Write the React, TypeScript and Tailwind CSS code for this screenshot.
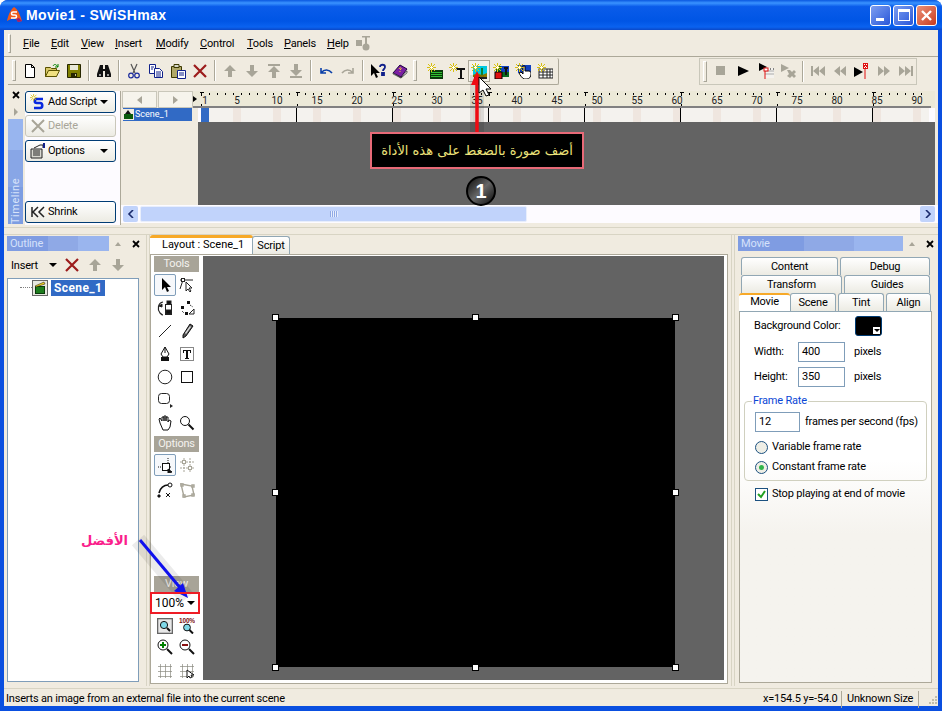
import type { ReactNode } from 'react';

const UI_FONT = 'font-[Roboto,"Liberation_Sans",sans-serif]';

const Ico = ({ children, w = 16, h = 16 }: { children: ReactNode; w?: number; h?: number }) => (
  <svg width={w} height={h} viewBox={`0 0 ${w} ${h}`} className="block shrink-0">
    {children}
  </svg>
);

const Sparkle = () => (
  <g stroke="#d8c010" strokeWidth="1">
    <path d="M4.5 0v9M0 4.5h9M1 1l7 7M8 1L1 8" />
    <path d="M4.5 3v3M3 4.5h3" stroke="#fff" />
  </g>
);

const CloseX = () => (
  <svg width="8" height="8" viewBox="0 0 8 8" className="block shrink-0">
    <path d="M1 1l6 6M7 1L1 7" stroke="#000" strokeWidth="1.8" />
  </svg>
);

const icons: Record<string, ReactNode> = {
  new: <path d="M3.5 1.5h6l3 3v10h-9zM9.5 1.5v3h3" fill="#fff" stroke="#000" />,
  open: (
    <g>
      <path d="M1.5 4.5h5l1 1h5v8h-11z" fill="#d8c868" stroke="#5a5200" />
      <path d="M1.5 13.5l3-6h11l-3 6z" fill="#f0e080" stroke="#5a5200" />
      <path d="M9 3c1-2 3-2 4 0l1 1M14 1v3h-3" fill="none" stroke="#008000" />
    </g>
  ),
  save: (
    <g>
      <path d="M1.5 1.5h13v13h-13z" fill="#808000" stroke="#262600" />
      <path d="M4 2h8v5H4z" fill="#e8e8d8" />
      <path d="M5 10h6v4H5z" fill="#262600" />
      <path d="M9 11h1v2H9z" fill="#c8c890" />
    </g>
  ),
  binoc: (
    <g fill="#111">
      <path d="M4 2h3v4h2V2h3l3 9v3H9V8H7v6H1v-3z" />
      <path d="M3 11h2v2H3zM11 11h2v2h-2z" fill="#9a9a9a" />
    </g>
  ),
  cut: (
    <g fill="none" stroke="#1a2a9c" strokeWidth="1.2">
      <path d="M5 1l4 9M11 1l-4 9" stroke="#555" />
      <circle cx="5" cy="12.5" r="2.3" />
      <circle cx="11" cy="12.5" r="2.3" />
    </g>
  ),
  copy: (
    <g stroke="#10208a">
      <path d="M1.5 1.5h6v9h-6z" fill="#fff" />
      <path d="M6.5 5.5h5l3 3v6h-8z" fill="#fff" />
      <path d="M8 9h5M8 11h5M8 13h5M3 4h3M3 6h2" />
    </g>
  ),
  paste: (
    <g>
      <path d="M1.5 3.5h10v11h-10z" fill="#b0a868" stroke="#3c3800" />
      <path d="M4 1.5h5v3H4z" fill="#d8d8c8" stroke="#3c3800" />
      <path d="M7.5 7.5h8v8h-8z" fill="#fff" stroke="#10208a" />
      <path d="M9 10h5M9 12h5" stroke="#10208a" />
    </g>
  ),
  del: <path d="M2 2l12 12M14 2L2 14" stroke="#9c1c1c" strokeWidth="2.2" fill="none" />,
  up: <path d="M8 2l6 6h-4v6H6V8H2z" fill="#a8a598" />,
  down: <path d="M8 14l6-6h-4V2H6v6H2z" fill="#a8a598" />,
  top: <path d="M2 1h12v2H2zM8 3l6 6h-4v6H6V9H2z" fill="#a8a598" />,
  bottom: <path d="M2 13h12v2H2zM8 13l6-6h-4V1H6v6H2z" fill="#a8a598" />,
  undo: <path d="M3 5v5h5M3.5 9.5C6 6 11 6 14 10" fill="none" stroke="#0a3fa8" strokeWidth="1.6" />,
  redo: <path d="M13 5v5H8M12.5 9.5C10 6 5 6 2 10" fill="none" stroke="#a8a598" strokeWidth="1.6" />,
  help: (
    <g>
      <path d="M1 1v12l3-3 2 5 2-1-2-4h4z" fill="#000" />
      <path d="M10 4c0-3 5-3 5 0 0 2-2 2-2 4M12 10h2v2h-2z" fill="none" stroke="#10208a" strokeWidth="1.8" />
    </g>
  ),
  book: (
    <g>
      <path d="M1 10l7-8 7 4-6 8z" fill="#7b1fa2" stroke="#200040" />
      <path d="M1 10l8 5 6-7v2l-6 5-8-4z" fill="#fff" stroke="#222" strokeWidth=".6" />
      <path d="M7 6c1-2 3-1 2 0l-1 1M8 8v1" stroke="#f0d030" fill="none" />
    </g>
  ),
  addMovie: (
    <g>
      <rect x="3" y="7" width="13" height="9" fill="#0a3a0a" />
      <path d="M4 9.5h11M4 11.5h11M4 13.5h11" stroke="#30c030" />
      <Sparkle />
    </g>
  ),
  addText: (
    <g>
      <path d="M7 5h9v2h-3v8h2v1H9v-1h2V7H8z" fill="#111" />
      <Sparkle />
    </g>
  ),
  addImage: (
    <g>
      <rect x="2" y="3" width="14" height="11" fill="#00c8e0" />
      <path d="M2 12l4-2 5 2 5-2v4H2z" fill="#8a7a00" />
      <path d="M10 12V5h2v7z" fill="#108030" />
      <rect x="3" y="14" width="13" height="2" fill="#222" />
      <Sparkle />
    </g>
  ),
  addShape: (
    <g>
      <rect x="3" y="3" width="13" height="11" fill="#0a6a20" />
      <path d="M8 3h8v6H8z" fill="#1040c0" />
      <rect x="2" y="9" width="7" height="7" fill="#e01010" stroke="#000" />
      <path d="M11 4h4v2h-1v6h-2V6h-1z" fill="#111" />
      <Sparkle />
    </g>
  ),
  addButton: (
    <g>
      <rect x="3" y="2" width="13" height="8" fill="#1040c0" />
      <path d="M8 8V3h2v5h4c2 0 2 2 2 3 0 3-2 5-4 5H9c-2-1-4-4-5-6l2-1 2 2z" fill="#fff" stroke="#000" />
      <Sparkle />
    </g>
  ),
  addSprite: (
    <g>
      <rect x="2" y="6" width="14" height="9" fill="#fff" stroke="#222" />
      <path d="M2 9h14M2 12h14M6 6v9M10 6v9M13 6v9" stroke="#222" />
      <Sparkle />
    </g>
  ),
  stop: <rect x="2" y="3" width="9" height="9" fill="#a8a598" />,
  play: <path d="M2 3l11 5-11 5z" fill="#000" />,
  playScene: (
    <g>
      <path d="M1 0l8 4-8 4z" fill="#000" />
      <path d="M7 5h9v10H7z" fill="#f4f2ee" />
      <path d="M7 8h9M7 11h9" stroke="#aaa" />
      <path d="M7 5v11" stroke="#e01010" />
      <rect x="6" y="5" width="4" height="3" fill="#fff" stroke="#e01010" />
      <path d="M12 6h1M15 6h1" stroke="#111" />
    </g>
  ),
  playGray: (
    <g fill="#a8a598">
      <path d="M1 1l8 4-8 4z" />
      <path d="M7 7h3l2 2 2-2 2 2-2 2 2 2-2 2-2-2-2 2-3-2 2-2z" />
    </g>
  ),
  first: <path d="M1 3h2v10H1zM9 3v10L3 8zM15 3v10L9 8z" fill="#a8a598" />,
  prev: <path d="M8 3v10L2 8zM14 3v10L8 8z" fill="#a8a598" />,
  playFlag: (
    <g>
      <path d="M0 4l9 5-9 5z" fill="#000" />
      <path d="M11 1v15" stroke="#e01010" />
      <rect x="9" y="0" width="5" height="6" fill="#e01010" />
      <path d="M10 1h1v1h-1zM12 1h1v1h-1zM11 3h1v1h-1zM10 4h1v1h-1zM12 4h1v1h-1z" fill="#fff" />
    </g>
  ),
  next: <path d="M2 3v10l6-5zM8 3v10l6-5z" fill="#a8a598" />,
  last: <path d="M1 3v10l6-5zM7 3v10l6-5zM13 3h2v10h-2z" fill="#a8a598" />,
  arrow: <path d="M5 1v12l3-3 2 5 2-1-2-4h4z" fill="#000" />,
  subselect: (
    <g fill="none" stroke="#222">
      <path d="M1 3h13M4 3l-3 9" />
      <rect x="2.5" y="1.5" width="3" height="3" fill="#fff" />
      <path d="M7 5v9l2-2 2 3 1-1-2-3h3z" fill="#fff" />
    </g>
  ),
  rotate: (
    <g fill="none" stroke="#222">
      <path d="M6 2C1 3 0 9 3 13c1 1 2 2 3 2" strokeWidth="1.2" />
      <path d="M2 6l3-2v3z" fill="#111" />
      <rect x="8.5" y="4.5" width="6" height="10" fill="#fff" />
      <rect x="9" y="10" width="5" height="4" fill="#111" />
      <rect x="10" y="1" width="4" height="3" fill="#111" />
    </g>
  ),
  scale: (
    <g>
      <path d="M8 1h3v3H8zM2 6h3v3H2zM6 12h3v3H6z" fill="#111" />
      <path d="M11 5l3 2M3 11l2 2" stroke="#111" strokeDasharray="1 1" />
      <path d="M15 9v5h-5z" fill="#fff" stroke="#222" />
    </g>
  ),
  line: <path d="M2 14L14 2" stroke="#222" />,
  pencil: (
    <g>
      <path d="M11 1l3 2-7 10-3 2 0-3z" fill="#555" stroke="#111" />
      <path d="M11 3l1 1-5 7-1-1z" fill="#ddd" />
    </g>
  ),
  pen: (
    <g stroke="#111">
      <path d="M8 1l4 7-2 3H6L4 8z" fill="#fff" />
      <path d="M8 1v6" />
      <rect x="4.5" y="11.5" width="7" height="3" fill="#111" />
    </g>
  ),
  text: (
    <g>
      <rect x="1.5" y="1.5" width="13" height="13" fill="#fff" stroke="#111" strokeDasharray="1 1" />
      <path d="M4 4h8v3h-1V5H9v7h1v1H6v-1h1V5H5v2H4z" fill="#111" />
    </g>
  ),
  circle: <circle cx="8" cy="8" r="6.8" fill="#fff" stroke="#222" />,
  rect: <rect x="2.5" y="2.5" width="11" height="11" fill="#fff" stroke="#111" />,
  roundRect: (
    <g>
      <rect x="1.5" y="1.5" width="11" height="10" rx="3" fill="#fff" stroke="#222" />
      <path d="M13 12l3 2-3 2z" fill="#222" />
    </g>
  ),
  hand: (
    <g fill="#fff" stroke="#111">
      <path d="M3 8L2 4l1-1 2 3V2h2v4-5h2v5-4h2v5l1-2 2 1-1 6-2 3H6z" />
    </g>
  ),
  zoom: (
    <g fill="none" stroke="#111">
      <circle cx="6" cy="6" r="4.5" fill="#fff" />
      <path d="M9.5 9.5l5 5" strokeWidth="2" />
    </g>
  ),
  snapBox: (
    <g stroke="#111">
      <path d="M11 1v14M1 10h14" strokeDasharray="1 1" fill="none" />
      <rect x="5.5" y="6.5" width="7" height="7" fill="#fff" />
      <path d="M11 12l4 3-4 1z" fill="#111" />
    </g>
  ),
  snapGray: (
    <g stroke="#a8a598" fill="#fff">
      <path d="M1 5h14M1 11h14M5 1v14M11 1v14" strokeDasharray="2 1" fill="none" />
      <rect x="3.5" y="3.5" width="3" height="3" />
      <rect x="9.5" y="9.5" width="3" height="3" />
    </g>
  ),
  curve: (
    <g fill="none" stroke="#111">
      <path d="M2 11C3 6 7 3 11 3" strokeWidth="1.6" />
      <circle cx="13" cy="3" r="2" fill="#fff" />
      <path d="M9 11l4 4M13 11l-4 4" />
      <path d="M1 13h2v2H1z" fill="#111" />
    </g>
  ),
  polyGray: (
    <g fill="none" stroke="#a8a598" strokeWidth="1.4">
      <path d="M2 2l11 2 2 9-10 2z" />
      <path d="M2 2h2v2H2zM13 3h2v2h-2zM4 13h2v2H4zM13 12h2v2h-2z" fill="#fff" />
    </g>
  ),
  zoomFit: (
    <g>
      <rect x="0.5" y="0.5" width="15" height="15" fill="#e8e8e8" stroke="#666" strokeWidth="1.6" />
      <circle cx="7" cy="7" r="3.6" fill="#7fd8e8" stroke="#111" />
      <path d="M10 10l3 3" stroke="#111" strokeWidth="2" />
    </g>
  ),
  zoom100: (
    <g>
      <circle cx="8" cy="9.5" r="3.4" fill="#7fd8e8" stroke="#111" />
      <path d="M10.5 12l3.5 3.5" stroke="#111" strokeWidth="2" />
      <text x="8" y="5" textAnchor="middle" fontSize="6.5" fontWeight="700" fill="#7a1010" fontFamily="Liberation Sans, sans-serif">
        100%
      </text>
    </g>
  ),
  zoomIn: (
    <g>
      <circle cx="6" cy="6" r="5" fill="#fff" stroke="#111" />
      <path d="M3 6h6M6 3v6" stroke="#008000" strokeWidth="2" />
      <path d="M10 10l5 5" stroke="#111" strokeWidth="2" />
    </g>
  ),
  zoomOut: (
    <g>
      <circle cx="6" cy="6" r="5" fill="#fff" stroke="#111" />
      <path d="M3 6h6" stroke="#8a1010" strokeWidth="2" />
      <path d="M10 10l5 5" stroke="#111" strokeWidth="2" />
    </g>
  ),
  grid: <path d="M1 3.5h14M1 8.5h14M1 13.5h14M3.5 1v14M8.5 1v14M13.5 1v14" stroke="#8a8a80" fill="none" strokeWidth=".7" />,
  gridCursor: (
    <g>
      <path d="M1 3.5h14M1 8.5h14M1 13.5h14M3.5 1v14M8.5 1v14M13.5 1v14" stroke="#8a8a80" fill="none" strokeWidth=".7" />
      <path d="M8 7v8l2-2 1 2 2-1-1-2h3z" fill="#fff" stroke="#111" />
    </g>
  ),
};

const menus = [
  ['F', 'ile', 'w-[28px]'],
  ['E', 'dit', 'w-[30px]'],
  ['V', 'iew', 'w-[34px]'],
  ['I', 'nsert', 'w-[41px]'],
  ['M', 'odify', 'w-[44px]'],
  ['C', 'ontrol', 'w-[47px]'],
  ['T', 'ools', 'w-[37px]'],
  ['P', 'anels', 'w-[43px]'],
  ['H', 'elp', 'w-[28px]'],
];

const Grip = ({ className }: { className?: string }) => (
  <div className={`h-[21px] w-[4px] shrink-0 border border-r-[#a8a598] border-b-[#a8a598] border-l-white border-t-white ${className ?? ''}`} />
);
const Sep = () => <div className="mx-[3px] h-[21px] w-[2px] shrink-0 border-l border-r border-l-[#aca899] border-r-white" />;

const Tb = ({ name, hot }: { name: string; hot?: boolean }) => (
  <div className={`flex h-[22px] w-[22px] shrink-0 items-center justify-center ${hot ? 'border border-[#aca899] bg-[#f4f2ea]' : ''}`}>
    <Ico>{icons[name]}</Ico>
  </div>
);

const SideButton = ({
  icon,
  label,
  caret,
  disabled,
  className,
}: {
  icon: ReactNode;
  label: string;
  caret?: boolean;
  disabled?: boolean;
  className?: string;
}) => (
  <div
    className={`flex h-[22px] w-[91px] items-center rounded-[3px] border bg-gradient-to-b from-white to-[#ecebe3] pl-[3px] pr-[7px] ${
      disabled ? 'border-[#c9c7ba] text-[#a8a598]' : 'border-[#003c74] text-black'
    } ${className ?? ''}`}
  >
    <span className="mr-[1px] flex w-[18px] justify-center">{icon}</span>
    <span className="flex-1 text-[11px]">{label}</span>
    {caret && <span className="h-0 w-0 border-x-[4px] border-t-[4px] border-x-transparent border-t-black" />}
  </div>
);

const Frames = () => (
  <div className="flex h-[14px] overflow-hidden bg-[#fdfbff] pl-[3px]">
    {Array.from({ length: 91 }, (_, i) => i + 1).map((frame) => (
      <div
        key={frame}
        className={`h-full w-[8px] shrink-0 ${
          frame === 1 ? 'bg-[#316ac5]' : frame % 5 === 0 ? 'bg-[#efe6df]' : 'bg-[#f4f2ee]'
        } ${frame % 12 === 0 ? 'border-r border-r-black' : ''}`}
      />
    ))}
  </div>
);

const Ruler = () => {
  const labels = [1, ...Array.from({ length: 18 }, (_, i) => (i + 1) * 5)];
  return (
    <div className="relative h-[17px] bg-[#ece9d8]">
      <svg width="738" height="17" viewBox="0 0 738 17" className="absolute left-0 top-0">
        <path d="M0 5l4 3-4 3z" fill="#000" />
        {Array.from({ length: 91 }, (_, i) => (
          <path key={i} d={`M${8.5 + i * 8} 2v2`} stroke="#000" />
        ))}
        {[0, 1, 2, 3, 4, 5, 6, 7].map((i) => (
          <g key={i} stroke="#000">
            <path d={`M${7 + i * 96} 1.5h4`} />
            <path d={`M${8.5 + i * 96} 1v4`} />
            <path d={`M${8.5 + i * 96} 13v2`} />
          </g>
        ))}
        <rect x="0" y="15" width="738" height="2" fill="#808080" />
      </svg>
      {labels.map((n) => (
        <span
          key={n}
          className="absolute top-[3px] w-[16px] text-center text-[10px] leading-[13px] tracking-normal text-[#222]"
          style={{ left: 8 + (n - 1) * 8 - 4 }}
        >
          {n}
        </span>
      ))}
    </div>
  );
};

const PanelTitle = ({ title, width }: { title: string; width: string }) => (
  <div className="flex h-[15px] items-center">
    <div
      className={`${width} h-full bg-[linear-gradient(90deg,#7f9ce2_0%,#7f9ce2_40%,#8fa9e6_40%,#8fa9e6_70%,#9ab5ee_70%)] pl-[3px] text-[11px] leading-[15px] text-[#d5e1fa]`}
    >
      {title}
    </div>
    <span className="ml-[6px] h-0 w-0 border-x-[3px] border-b-[4px] border-x-transparent border-b-[#a8a598]" />
    <span className="ml-[11px]">
      <CloseX />
    </span>
  </div>
);

const ToolRow = ({
  a,
  b,
  active,
  height = 'h-[23px]',
  className,
}: {
  a?: string;
  b?: string;
  active?: boolean;
  height?: string;
  className?: string;
}) => (
  <div className={`flex items-center ${height} ${className ?? ''}`}>
    <div
      className={`flex h-[22px] w-[22px] items-center justify-center rounded-[2px] ${
        active ? 'border border-[#7f9db9] bg-[#f6f8fb]' : ''
      }`}
    >
      {a && <Ico>{icons[a]}</Ico>}
    </div>
    <div className="flex h-[22px] w-[22px] items-center justify-center">{b && <Ico>{icons[b]}</Ico>}</div>
  </div>
);

const ToolHeader = ({ label, className }: { label: string; className?: string }) => (
  <div className={`h-[16px] w-[45px] bg-[#a8a498] text-center text-[11px] leading-[16px] text-[#f4f2ee] ${className ?? ''}`}>
    {label}
  </div>
);

const handleSpots = [
  'left-[-4px] top-[-4px]',
  'left-[196px] top-[-4px]',
  'right-[-4px] top-[-4px]',
  'left-[-4px] top-[171px]',
  'right-[-4px] top-[171px]',
  'bottom-[-4px] left-[-4px]',
  'bottom-[-4px] left-[196px]',
  'bottom-[-4px] right-[-4px]',
];

const Tab = ({ label, className }: { label: string; className: string }) => (
  <div
    className={`flex h-[18px] items-center justify-center rounded-t-[3px] border border-b-0 border-[#91a7b4] bg-gradient-to-b from-white to-[#ecebe3] pt-[2px] text-[11px] ${className}`}
  >
    {label}
  </div>
);

const FieldBox = ({ value, className }: { value: string; className: string }) => (
  <div className={`flex h-[20px] items-center border border-[#7f9db9] bg-white pl-[3px] text-[11px] ${className}`}>{value}</div>
);

export default function App() {
  return (
    <div className={`relative h-[711px] w-[942px] overflow-hidden whitespace-nowrap bg-white tracking-[-0.2px] text-black ${UI_FONT}`}>
      <div className="flex h-full flex-col rounded-t-[8px] bg-[#0a4fe0]">
        {/* title bar */}
        <div className="flex h-[30px] shrink-0 items-center rounded-t-[8px] bg-[linear-gradient(180deg,#0a58e0_0%,#3a93ff_10%,#0a5cea_22%,#0055e5_70%,#0a62f0_90%,#0a48c8_100%)] pl-[6px] pr-[5px]">
          <svg width="16" height="16" viewBox="0 0 16 16" className="shrink-0">
            <path d="M8 0c4 2 6 8 8 14l-4 1-2-3H5l-4 2C2 9 4 3 8 0z" fill="#ee5a1c" />
            <path d="M11 5H7C5 5 5 8 7 8h2c2 0 2 3 0 3H5" fill="none" stroke="#fff" strokeWidth="1.6" />
            <path d="M12 15l-2-3 3-1 3 3z" fill="#a01c70" />
          </svg>
          <span className="ml-[4px] flex-1 font-['Liberation_Sans',sans-serif] text-[14px] font-bold tracking-[0.4px] text-white">
            Movie1 - SWiSHmax
          </span>
          <div className="flex h-[21px] w-[21px] items-end justify-start rounded-[3px] border border-white bg-gradient-to-br from-[#7d9df0] to-[#2a55d8] pb-[4px] pl-[5px]">
            <span className="h-[3px] w-[8px] bg-white" />
          </div>
          <div className="ml-[2px] flex h-[21px] w-[21px] items-center justify-center rounded-[3px] border border-white bg-gradient-to-br from-[#7d9df0] to-[#2a55d8]">
            <span className="h-[12px] w-[12px] border border-t-[3px] border-white" />
          </div>
          <div className="ml-[2px] flex h-[21px] w-[21px] items-center justify-center rounded-[3px] border border-white bg-gradient-to-br from-[#eb9078] to-[#c8381a]">
            <svg width="13" height="13" viewBox="0 0 13 13">
              <path d="M2 2l9 9M11 2l-9 9" stroke="#fff" strokeWidth="2.4" />
            </svg>
          </div>
        </div>

        <div className="mx-[4px] flex min-h-0 flex-1 flex-col bg-[#f0ebe0]">
          {/* menu bar */}
          <div className="flex h-[27px] shrink-0 items-center border-b border-b-[#aca899] pl-[4px] text-[11px]">
            <div className="mr-[12px] h-[19px] w-[3px] border border-r-[#a8a598] border-b-[#a8a598] border-l-white border-t-white" />
            {menus.map(([first, rest, width]) => (
              <span key={first} className={`${width} shrink-0 pt-[3px]`}>
                <span className="underline">{first}</span>
                {rest}
              </span>
            ))}
            <svg width="18" height="18" viewBox="0 0 18 18" className="shrink-0">
              <rect x="1" y="6" width="6" height="6" fill="#a8a598" />
              <circle cx="11" cy="13" r="3.5" fill="#a8a598" />
              <path d="M7 2h8v1.5h-3V11h-2V3.5H7z" fill="#a8a598" />
            </svg>
          </div>

          {/* toolbars */}
          <div className="flex h-[28px] shrink-0 items-center pl-[4px]">
            <div className="flex h-[27px] w-[551px] shrink-0 items-center rounded-r-[2px] border-r border-b border-r-[#aca899] border-b-[#aca899] pl-[4px]">
              <Grip className="mr-[3px]" />
              <Tb name="new" />
              <Tb name="open" />
              <Tb name="save" />
              <Sep />
              <Tb name="binoc" />
              <Sep />
              <Tb name="cut" />
              <Tb name="copy" />
              <Tb name="paste" />
              <Tb name="del" />
              <Sep />
              <Tb name="up" />
              <Tb name="down" />
              <Tb name="top" />
              <Tb name="bottom" />
              <Sep />
              <Tb name="undo" />
              <Tb name="redo" />
              <Sep />
              <Tb name="help" />
              <Tb name="book" />
              <Grip className="ml-[2px] mr-[7px]" />
              <Tb name="addMovie" />
              <Tb name="addText" />
              <Tb name="addImage" hot />
              <Tb name="addShape" />
              <Tb name="addButton" />
              <Tb name="addSprite" />
            </div>
            <div className="ml-[140px] flex h-[27px] w-[218px] shrink-0 items-center border border-[#c9c7ba] pl-[3px]">
              <Grip className="mr-[4px]" />
              <Tb name="stop" />
              <Tb name="play" />
              <Tb name="playScene" />
              <Tb name="playGray" />
              <Sep />
              <Tb name="first" />
              <Tb name="prev" />
              <Tb name="playFlag" />
              <Tb name="next" />
              <Tb name="last" />
            </div>
          </div>

          {/* timeline panel */}
          <div className="flex h-[140px] shrink-0 pt-[6px]">
            <div className="flex w-[116px] shrink-0 bg-[#fdfbff]">
              <div className="flex w-[21px] shrink-0 flex-col items-center bg-[#f0ebe0] pl-[2px]">
                <CloseX />
                <span className="mt-[9px] h-0 w-0 border-y-[4px] border-l-[4px] border-y-transparent border-l-[#a8a598]" />
                <div className="mt-[3px] flex h-[105px] w-[15px] items-end justify-center bg-[linear-gradient(180deg,#98b5ef_0%,#98b5ef_30%,#88a6e6_30%,#88a6e6_65%,#7d9de2_65%)]">
                  <span className="rotate-180 text-[11px] leading-[15px] tracking-[0.5px] text-[#d8e3fa] [writing-mode:vertical-rl]">
                    Timeline
                  </span>
                </div>
              </div>
              <div className="flex flex-col">
                <SideButton
                  label="Add Script"
                  caret
                  icon={
                    <Ico>
                      <path d="M13 5H7C4 5 4 9 7 9h3c3 0 3 5 0 5H4" fill="none" stroke="#0a2ae0" strokeWidth="2.6" />
                      <g transform="scale(.8)">
                        <Sparkle />
                      </g>
                    </Ico>
                  }
                />
                <SideButton
                  label="Delete"
                  disabled
                  className="mt-[2px]"
                  icon={
                    <Ico>
                      <path d="M2 2l12 12M14 2L2 14" stroke="#a8a598" strokeWidth="2" />
                    </Ico>
                  }
                />
                <SideButton
                  label="Options"
                  caret
                  className="mt-[3px]"
                  icon={
                    <Ico>
                      <path d="M1 6h11v9H1z" fill="#d8d8d0" stroke="#222" />
                      <path d="M3 8h7M3 10h7M3 12h7" stroke="#222" />
                      <path d="M4 5l6-3h3v3" fill="none" stroke="#222" />
                      <path d="M14 0v5" stroke="#10208a" strokeWidth="2" />
                    </Ico>
                  }
                />
                <SideButton
                  label="Shrink"
                  className="mt-[39px]"
                  icon={
                    <Ico>
                      <path d="M2 3v10M8 3L3 8l5 5M14 3L9 8l5 5" fill="none" stroke="#222" strokeWidth="1.5" />
                    </Ico>
                  }
                />
              </div>
            </div>

            <div className="flex min-w-0 flex-1 flex-col border-l border-l-[#aca899] pb-[2px]">
              <div className="flex min-h-0 flex-1">
                <div className="w-[72px] shrink-0">
                  <div className="flex h-[17px] pl-[1px]">
                    <div className="flex w-[35px] items-center justify-center border border-[#c9c7ba] bg-[#f6f4ec]">
                      <span className="h-0 w-0 border-y-[4px] border-r-[5px] border-y-transparent border-r-[#a8a598]" />
                    </div>
                    <div className="ml-[1px] flex w-[35px] items-center justify-center border border-[#c9c7ba] bg-[#f6f4ec]">
                      <span className="h-0 w-0 border-y-[4px] border-l-[5px] border-y-transparent border-l-[#a8a598]" />
                    </div>
                  </div>
                  <div className="ml-[2px] flex h-[13px] w-[69px] items-center bg-[#316ac5] text-[9px] leading-none tracking-normal text-white">
                    <svg width="11" height="11" viewBox="0 0 11 11" className="mr-[1px] shrink-0 bg-[#f0ebe0]">
                      <path d="M1 5h9v5H1z" fill="#0a5a0a" />
                      <path d="M2 5l3-4 3 4" fill="#111" />
                    </svg>
                    Scene_1
                  </div>
                </div>
                <div className="flex min-w-0 flex-1 flex-col pr-[3px]">
                  <Ruler />
                  <div className="ml-[5px] min-h-0 flex-1 bg-[#636363]">
                    <Frames />
                  </div>
                </div>
              </div>
              <div className="flex h-[18px] shrink-0 items-center bg-[#fdfbff] pl-[2px] pr-[3px]">
                <div className="flex h-[16px] w-[15px] items-center justify-center rounded-[2px] bg-[#c1d3fb]">
                  <svg width="8" height="8" viewBox="0 0 8 8">
                    <path d="M6 0L2 4l4 4" fill="none" stroke="#1a2a6c" strokeWidth="1.6" />
                  </svg>
                </div>
                <div className="ml-[2px] flex h-[16px] w-[387px] items-center justify-center rounded-[2px] border border-[#e8eefc] bg-[#c1d3fb]">
                  <span className="h-[6px] w-[8px] bg-[repeating-linear-gradient(90deg,#8fa9e6_0,#8fa9e6_1px,#e8eefc_1px,#e8eefc_2px)]" />
                </div>
                <div className="flex-1" />
                <div className="flex h-[16px] w-[15px] items-center justify-center rounded-[2px] bg-[#c1d3fb]">
                  <svg width="8" height="8" viewBox="0 0 8 8">
                    <path d="M2 0l4 4-4 4" fill="none" stroke="#1a2a6c" strokeWidth="1.6" />
                  </svg>
                </div>
              </div>
            </div>
          </div>

          {/* splitter */}
          <div className="mt-[2px] h-[8px] shrink-0 border-y border-y-[#d8d4c4]" />

          {/* docked panels */}
          <div className="flex h-[451px] shrink-0">
            {/* outline */}
            <div className="flex w-[139px] shrink-0 flex-col pl-[3px] pt-[1px]">
              <PanelTitle title="Outline" width="w-[102px]" />
              <div className="flex h-[27px] items-center pl-[4px] text-[11px]">
                <span className="mt-[3px] w-[38px]">Insert</span>
                <span className="h-0 w-0 border-x-[4px] border-t-[4px] border-x-transparent border-t-black" />
                <span className="ml-[7px]">
                  <Ico>{icons.del}</Ico>
                </span>
                <span className="ml-[7px]">
                  <Ico>{icons.up}</Ico>
                </span>
                <span className="ml-[7px]">
                  <Ico>{icons.down}</Ico>
                </span>
              </div>
              <div className="h-[404px] w-[132px] border border-[#7f9db9] bg-white">
                <div className="flex h-[17px] items-center pl-[12px]">
                  <span className="h-0 w-[12px] border-t border-dotted border-t-[#808080]" />
                  <svg width="16" height="16" viewBox="0 0 16 16" className="shrink-0">
                    <rect x="0.5" y="0.5" width="15" height="15" fill="#e8e8e0" stroke="#666" />
                    <rect x="3" y="6" width="10" height="8" fill="#0a3a0a" />
                    <path d="M4 8h8M4 10h8M4 12h8" stroke="#30c030" />
                    <path d="M3 6l9-4 1 2-9 3z" fill="#f0d020" stroke="#111" strokeWidth=".5" />
                  </svg>
                  <span className="ml-[3px] flex h-[16px] w-[54px] items-center bg-[#316ac5] pl-[3px] text-[12px] font-bold tracking-[0.4px] text-white">
                    Scene_1
                  </span>
                </div>
              </div>
            </div>

            <div className="ml-[3px] w-[4px] shrink-0 border-x border-x-[#d8d4c4]" />

            {/* layout */}
            <div className="flex w-[578px] shrink-0 flex-col">
              <div className="flex h-[19px] items-end">
                <div className="h-[19px] w-[103px] rounded-t-[3px] border-t-[3px] border-t-[#f7a928] bg-white pl-[12px] text-[11px] leading-[14px] tracking-normal">
                  Layout : Scene_1
                </div>
                <Tab label="Script" className="ml-[-1px] h-[17px] w-[38px]" />
              </div>
              <div className="flex h-[430px] border border-[#aca899] bg-white pb-[3px] pl-[3px] pr-[3px] pt-[1px]">
                <div className="flex w-[49px] shrink-0 flex-col">
                  <ToolHeader label="Tools" />
                  <div className="mt-[1px]">
                    <ToolRow a="arrow" b="subselect" active />
                    <ToolRow a="rotate" b="scale" />
                    <ToolRow a="line" b="pencil" />
                    <ToolRow a="pen" b="text" />
                    <ToolRow a="circle" b="rect" />
                    <ToolRow a="roundRect" />
                    <ToolRow a="hand" b="zoom" />
                  </div>
                  <ToolHeader label="Options" className="mt-[2px]" />
                  <div className="mt-[1px]">
                    <ToolRow a="snapBox" b="snapGray" active />
                    <ToolRow a="curve" b="polyGray" className="mt-[2px]" />
                  </div>
                  <div className="flex-1" />
                  <ToolHeader label="View" />
                  <div className="relative z-10 ml-[-4px] flex h-[22px] w-[50px] items-center justify-center border-2 border-[#ee1c25] text-[12px] tracking-normal">
                    100%
                    <span className="ml-[3px] h-0 w-0 border-x-[4px] border-t-[4px] border-x-transparent border-t-black" />
                  </div>
                  <ToolRow a="zoomFit" b="zoom100" />
                  <ToolRow a="zoomIn" b="zoomOut" height="h-[20px]" />
                  <ToolRow a="grid" b="gridCursor" className="pt-[4px]" />
                </div>
                <div className="flex min-w-0 flex-1 bg-[#636363] pl-[73px] pt-[62px]">
                  <div className="relative h-[349px] w-[399px] bg-black">
                    {handleSpots.map((spot) => (
                      <span key={spot} className={`absolute h-[7px] w-[7px] border border-black bg-white ${spot}`} />
                    ))}
                  </div>
                </div>
              </div>
            </div>

            <div className="ml-[3px] w-[4px] shrink-0 border-x border-x-[#d8d4c4]" />

            {/* movie properties */}
            <div className="flex min-w-0 flex-1 flex-col pl-[3px] pt-[1px]">
              <PanelTitle title="Movie" width="w-[165px]" />
              <div className="mt-[6px] flex pl-[3px]">
                <Tab label="Content" className="w-[97px]" />
                <Tab label="Debug" className="ml-[2px] w-[90px]" />
              </div>
              <div className="flex pl-[3px]">
                <Tab label="Transform" className="w-[101px]" />
                <Tab label="Guides" className="ml-[2px] w-[86px]" />
              </div>
              <div className="flex items-end pl-[1px]">
                <div className="h-[18px] w-[51px] rounded-t-[3px] border-t-[2px] border-t-[#f7a928] bg-white text-center text-[11px] leading-[13px]">
                  Movie
                </div>
                <Tab label="Scene" className="w-[46px]" />
                <Tab label="Tint" className="ml-[2px] w-[46px]" />
                <Tab label="Align" className="ml-[2px] w-[45px]" />
              </div>
              <div className="ml-[1px] h-[372px] w-[193px] border border-[#aca899] border-t-[#91a7b4] bg-gradient-to-b from-white from-40% to-[#f5f3ee] to-60% text-[11px]">
                <div className="flex h-[28px] items-center pl-[14px]">
                  <span className="w-[101px]">Background Color:</span>
                  <span className="relative h-[20px] w-[27px] rounded-[3px] border border-[#003c74] bg-black">
                    <span className="absolute bottom-[1px] right-[1px] flex h-[7px] w-[7px] items-center justify-center bg-white">
                      <span className="h-0 w-0 border-x-[3px] border-t-[3px] border-x-transparent border-t-black" />
                    </span>
                  </span>
                </div>
                <div className="flex h-[24px] items-center pl-[14px]">
                  <span className="w-[44px]">Width:</span>
                  <FieldBox value="400" className="w-[47px]" />
                  <span className="ml-[9px]">pixels</span>
                </div>
                <div className="flex h-[26px] items-center pl-[14px]">
                  <span className="w-[44px]">Height:</span>
                  <FieldBox value="350" className="w-[47px]" />
                  <span className="ml-[9px]">pixels</span>
                </div>
                <div className="relative mx-[4px] mt-[11px] h-[80px] rounded-[4px] border border-[#d0d0bf] pl-[10px] pt-[10px]">
                  <span className="absolute left-[7px] top-[-8px] bg-white px-[1px] leading-[14px] text-[#0a46d5]">
                    Frame Rate
                  </span>
                  <div className="flex items-center">
                    <FieldBox value="12" className="w-[45px]" />
                    <span className="ml-[5px]">frames per second (fps)</span>
                  </div>
                  <div className="mt-[5px] flex h-[20px] items-center">
                    <span className="mr-[4px] h-[13px] w-[13px] rounded-full border border-[#1c5180] bg-[#eeeee6]" />
                    Variable frame rate
                  </div>
                  <div className="flex h-[20px] items-center">
                    <span className="mr-[4px] flex h-[13px] w-[13px] items-center justify-center rounded-full border border-[#1c5180] bg-[#eeeee6]">
                      <span className="h-[5px] w-[5px] rounded-full bg-[#31b44a]" />
                    </span>
                    Constant frame rate
                  </div>
                </div>
                <div className="mt-[5px] flex items-center pl-[15px]">
                  <span className="mr-[4px] flex h-[13px] w-[13px] items-center justify-center border border-[#1c5180] bg-white">
                    <svg width="9" height="9" viewBox="0 0 9 9">
                      <path d="M1 4l3 3 4-6" fill="none" stroke="#21a121" strokeWidth="2" />
                    </svg>
                  </span>
                  Stop playing at end of movie
                </div>
              </div>
            </div>
          </div>

          {/* status bar */}
          <div className="mt-[2px] flex h-[18px] shrink-0 items-center border-t border-t-[#d8d4c4] pl-[2px] pt-[4px] text-[11px]">
            <span className="flex-1">Inserts an image from an external file into the current scene</span>
            <span className="w-[82px] border-r border-r-[#aca899] pl-[3px]">x=154.5 y=-54.0</span>
            <span className="ml-[5px] w-[72px] border-r border-r-[#aca899]">Unknown Size</span>
            <svg width="14" height="12" viewBox="0 0 14 12" className="ml-[5px]">
              <path d="M11 2h2v2h-2zM8 5h2v2H8zM11 5h2v2h-2zM5 8h2v2H5zM8 8h2v2H8zM11 8h2v2h-2z" fill="#c0bcaa" />
            </svg>
          </div>
        </div>
        <div className="h-[5px] shrink-0" />
      </div>

      {/* annotation overlay */}
      <svg width="942" height="711" viewBox="0 0 942 711" className="pointer-events-none absolute left-0 top-0">
        <path d="M138 540L187 598" stroke="#000" strokeOpacity=".08" strokeWidth="16" />
        <path d="M477 135V75" stroke="#000" strokeOpacity=".1" strokeWidth="14" />
        <path d="M477 133V80" stroke="#ee0a12" strokeWidth="3.5" />
        <path d="M477 71l-6 14h12z" fill="#ee0a12" />
        <path d="M140 540l42 50" stroke="#1010ee" strokeWidth="3" />
        <path d="M188 598l-14-7 9-8z" fill="#1010ee" />
        <path d="M479 77v16l4-3 3 6 3-1-3-6h5z" fill="#fff" stroke="#000" />
      </svg>
      <div
        dir="rtl"
        className="absolute left-[370px] top-[132px] flex h-[37px] w-[214px] items-center justify-center border-2 border-[#e86a78] bg-black font-['DejaVu_Sans',sans-serif] text-[13px] tracking-normal text-[#ece27a]"
      >
        أضف صورة بالضغط على هذه الأداة
      </div>
      <div className="absolute left-[466px] top-[176px] flex h-[30px] w-[30px] items-center justify-center rounded-full border-2 border-black bg-gradient-to-br from-[#111] via-[#666] to-[#111] font-['Liberation_Sans',sans-serif] text-[20px] font-bold text-white">
        1
      </div>
      <div
        dir="rtl"
        className="absolute left-[81px] top-[531px] font-['DejaVu_Sans',sans-serif] text-[13px] font-bold leading-[20px] tracking-normal text-[#fa1e8c]"
      >
        الأفضل
      </div>
    </div>
  );
}
